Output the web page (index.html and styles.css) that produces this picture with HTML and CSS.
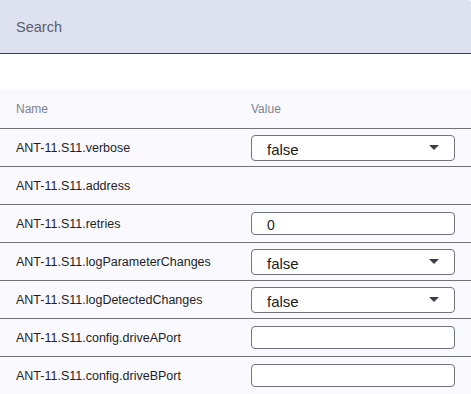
FILE: index.html
```html
<!DOCTYPE html>
<html lang="en">
<head>
    <meta charset="UTF-8">
    <meta name="viewport" content="width=device-width, initial-scale=1.0">
    <title>Parameters</title>
    <link rel="stylesheet" href="styles.css">
</head>
<body>
    <div class="search">Search</div>
    <div class="params">
        <div class="row head">
            <div class="name">Name</div>
            <div class="value">Value</div>
        </div>
        <div class="row">
            <div class="name">ANT-11.S11.verbose</div>
            <div class="value">
                <div class="select"><span>false</span>
                    <svg width="10" height="5" viewBox="0 0 10 5"><path d="M0 0h10L5 5z" fill="#3d3f4a"/></svg>
                </div>
            </div>
        </div>
        <div class="row">
            <div class="name">ANT-11.S11.address</div>
            <div class="value"></div>
        </div>
        <div class="row">
            <div class="name">ANT-11.S11.retries</div>
            <div class="value"><input class="field" type="text" value="0"></div>
        </div>
        <div class="row">
            <div class="name">ANT-11.S11.logParameterChanges</div>
            <div class="value">
                <div class="select"><span>false</span>
                    <svg width="10" height="5" viewBox="0 0 10 5"><path d="M0 0h10L5 5z" fill="#3d3f4a"/></svg>
                </div>
            </div>
        </div>
        <div class="row">
            <div class="name">ANT-11.S11.logDetectedChanges</div>
            <div class="value">
                <div class="select"><span>false</span>
                    <svg width="10" height="5" viewBox="0 0 10 5"><path d="M0 0h10L5 5z" fill="#3d3f4a"/></svg>
                </div>
            </div>
        </div>
        <div class="row">
            <div class="name">ANT-11.S11.config.driveAPort</div>
            <div class="value"><input class="field" type="text" value=""></div>
        </div>
        <div class="row">
            <div class="name">ANT-11.S11.config.driveBPort</div>
            <div class="value"><input class="field" type="text" value=""></div>
        </div>
    </div>
</body>
</html>
```

FILE: styles.css
```css
body {margin: 0; background-color: white;
    font-family: "Liberation Sans", Arial, sans-serif; color: #22232b;}

.search {height: 53px; display: flex; align-items: center; padding-left: 16px;
    background-color: #dee1f0; border-bottom: 1px solid #3c3e4c;
    border-top-right-radius: 3px;
    font-size: 14.5px; color: #5b5e6c;}

.params {margin-top: 35px; background-color: #f9f9fe;}
.row {display: grid; grid-template-columns: 235px 1fr; align-items: center;
    height: 37px; padding: 0 16px; border-bottom: 1px solid #70727e;}
.row.head {height: 39px;}
.name {font-size: 12.5px; color: #1e1f27;}
.head .name, .head .value {font-size: 12px; color: #80838f;}

.select {height: 24px; display: flex; align-items: center; justify-content: space-between;
    padding: 0 15px 0 15px; border: 1px solid #71737f; border-radius: 4px;
    background-color: white; font-size: 15px; color: #1b1c22;}
.select span {padding-top: 3px;}
.select svg {margin-top: -1px;}

.field {box-sizing: border-box; width: 100%; height: 23px; margin: 0;
    padding: 2px 15px 0 15px; border: 1px solid #71737f; border-radius: 4px;
    background-color: white; font-family: "Liberation Sans", Arial, sans-serif;
    font-size: 14px; color: #1b1c22; outline: none;}
```
